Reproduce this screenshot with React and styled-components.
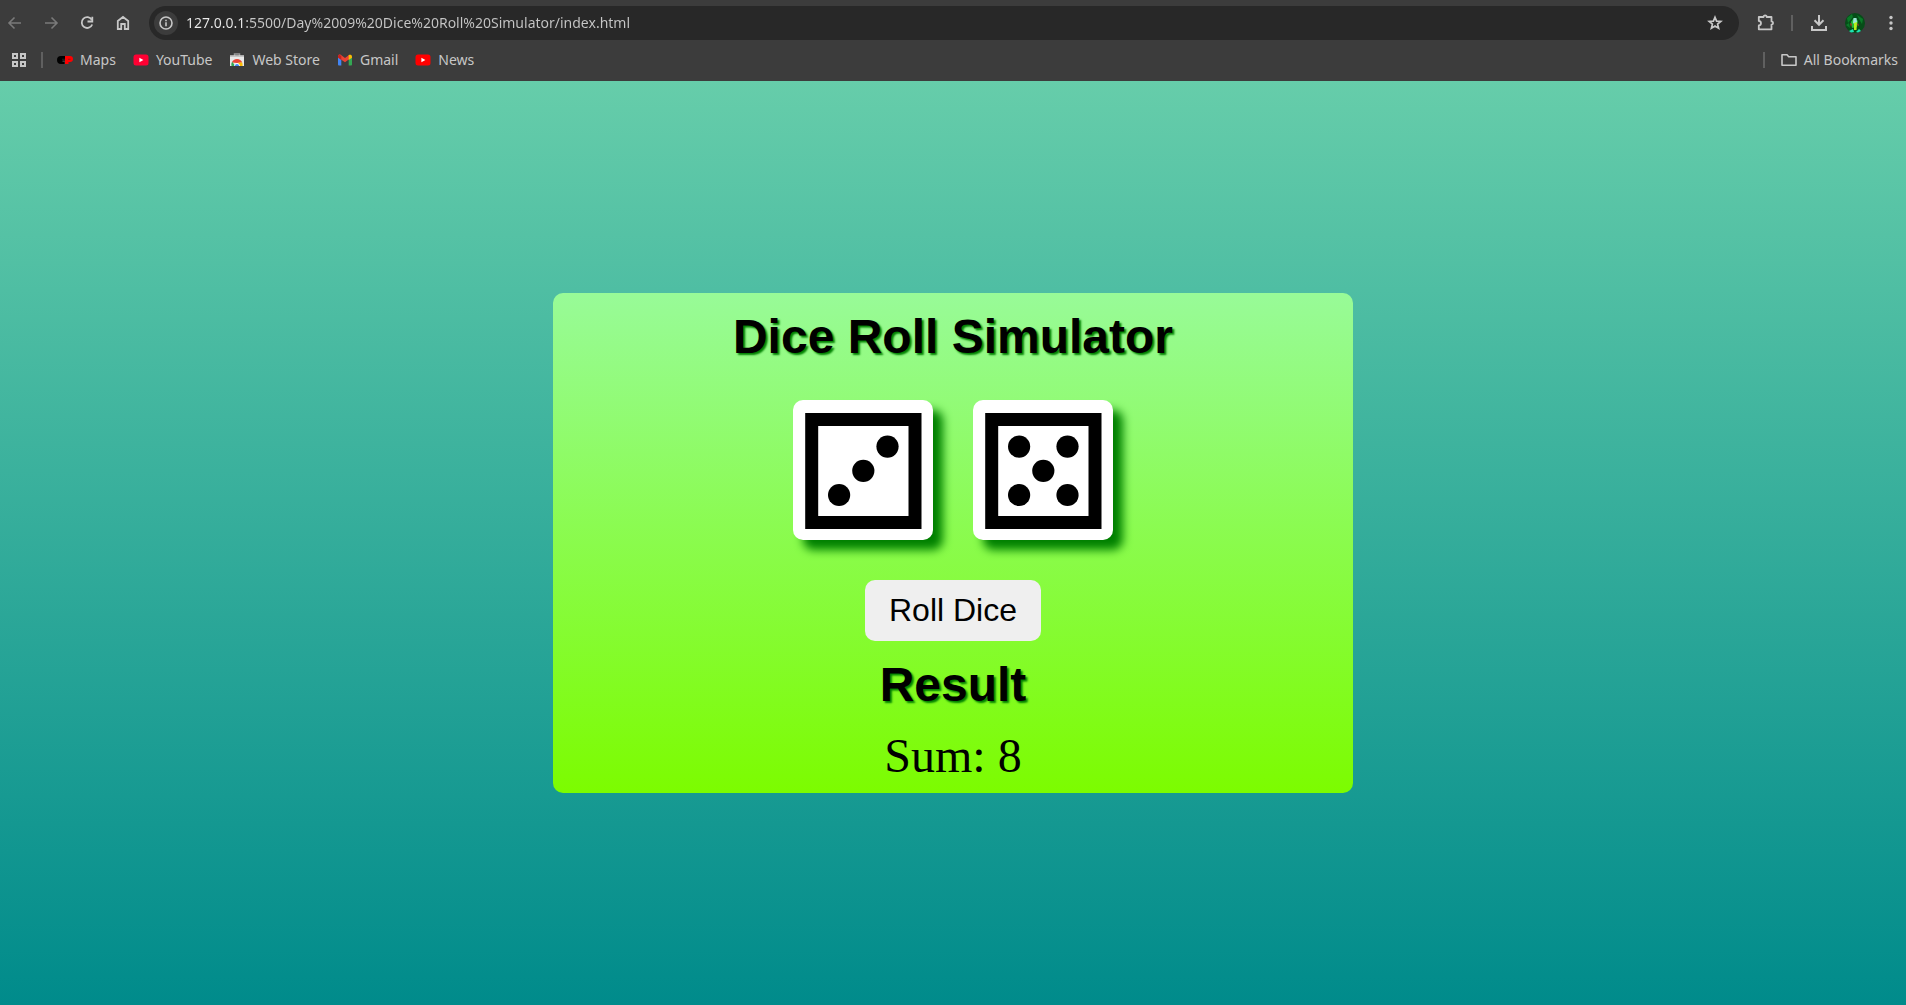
import React, { useState } from "react";
import styled, { createGlobalStyle } from "styled-components";

const GlobalStyle = createGlobalStyle`
  * { box-sizing: border-box; }
  html, body, #root { height: 100%; margin: 0; }
  button { font: inherit; color: inherit; border: 0; background: none; padding: 0; cursor: pointer; }
`;

const Browser = styled.div`
  display: flex;
  flex-direction: column;
  min-height: 100%;
`;

const Chrome = styled.header`
  background: #3c3c3c;
  color: #c7c7c7;
  font-family: "Noto Sans", "Open Sans", sans-serif;
`;

const Toolbar = styled.div`
  display: flex;
  align-items: center;
  height: 46px;
`;

const ButtonGroup = styled.div`
  display: flex;
  align-items: center;
  gap: 6px;
`;

const IconButton = styled.button`
  display: grid;
  place-items: center;
  width: 30px;
  height: 34px;
  color: ${(p) => (p.$dim ? "#7a7a7a" : "#c7c7c7")};
`;

const Divider = styled.span`
  width: 2px;
  height: 16px;
  margin: ${(p) => p.$margin};
  background: #606060;
`;

const AddressBar = styled.form`
  flex: 1;
  display: flex;
  align-items: center;
  height: 34px;
  margin: 0 12px 0 11px;
  padding: 0 9px 0 5px;
  gap: 8px;
  border-radius: 17px;
  background: #282828;
`;

const SiteInfo = styled.button`
  display: grid;
  place-items: center;
  width: 24px;
  height: 24px;
  border-radius: 50%;
  background: #3c3c3c;
`;

const UrlInput = styled.input`
  flex: 1;
  min-width: 0;
  height: 24px;
  padding: 0;
  border: 0;
  outline: 0;
  font: 14px/24px "Noto Sans", "Open Sans", sans-serif;
  color: transparent;
  caret-color: #ffffff;
  background: linear-gradient(90deg, #ebebeb 60px, #c7c7c7 60px);
  background-clip: text;
`;

const BookmarkBar = styled.nav`
  display: flex;
  align-items: center;
  height: 35px;
  padding: 0 8px 8px 11px;
  font-size: 14px;
  line-height: 20px;
`;

const Bookmarks = styled.div`
  display: flex;
  flex: 1;
  gap: 17px;
`;

const Bookmark = styled.a`
  display: flex;
  align-items: center;
  gap: 7px;
  color: inherit;
  text-decoration: none;
`;

const Page = styled.main`
  flex: 1;
  display: flex;
  align-items: center;
  justify-content: center;
  background: linear-gradient(mediumaquamarine, darkcyan);
`;

const Card = styled.section`
  display: flex;
  flex-direction: column;
  align-items: center;
  width: 800px;
  max-width: 100%;
  min-height: 500px;
  padding: 16px 0 8px;
  border-radius: 10px;
  background: linear-gradient(palegreen, lawngreen);
`;

const Title = styled.h1`
  margin: 0;
  font: bold 48px/56px "Liberation Sans", Arial, sans-serif;
  color: #000;
  text-shadow: 2px 2px 2px green;
`;

const DiceRow = styled.div`
  display: flex;
  gap: 40px;
  margin: 35px 0 40px;
`;

const DieBox = styled.div`
  width: 140px;
  height: 140px;
  border-radius: 10px;
  background: #fff;
  box-shadow: 10px 10px 10px green;
`;

const RollButton = styled.button`
  && {
    margin-bottom: 16px;
    padding: 12px 24px;
    border-radius: 10px;
    background: #efefef;
    color: #000;
    font: 32px/37px "Liberation Sans", Arial, sans-serif;
  }
`;

const Sum = styled.p`
  margin: 15px 0 0;
  font: 48px/56px "Liberation Serif", "Times New Roman", serif;
  color: #000;
`;

const Stroke = ({ size = 20, width = 2, children }) => (
  <svg width={size} height={size} viewBox="0 0 20 20" fill="none" stroke="currentColor" strokeWidth={width} aria-hidden="true">
    {children}
  </svg>
);

const ArrowIcon = ({ flip }) => (
  <Stroke width={1.6}>
    <path d={flip ? "M4 10h11.5M10.5 4.500l5.500 5.500-5.500 5.500" : "M16 10H4.500M9.500 4.500L4 10l5.500 5.500"} />
  </Stroke>
);

const PlayIcon = ({ color }) => (
  <svg width="16" height="16" viewBox="0 0 16 16" aria-hidden="true">
    <rect x="0.500" y="2.500" width="15" height="11" rx="2.500" fill={color} />
    <path d="M6.400 5.700v4.600L10.400 8z" fill="#fff" />
  </svg>
);

const MapsIcon = () => (
  <svg width="16" height="16" viewBox="0 0 16 16" aria-hidden="true">
    <path d="M8 4H4a4 4 0 0 0 0 8h3.500V10H5.500V8.600H8z" fill="#000" />
    <path d="M5 6.800h3v.8H5z" fill="#2c2c2c" />
    <path d="M8 4h5a3 3 0 0 1 3 3c0 2-1 3-3 3h-1.500v2H8z" fill="#f00" />
    <path d="M11 6.800h2.500v.8H11z" fill="#8c1010" />
  </svg>
);

const StoreIcon = () => (
  <svg width="16" height="16" viewBox="0 0 16 16" aria-hidden="true">
    <path d="M5.500 4V2h5v2" fill="none" stroke="#999" strokeWidth="1.500" />
    <path d="M1 3.500h14V14H1z" fill="#e8e8e8" />
    <path d="M1 3.500h14V5H1z" fill="#c4c4c4" />
    <path d="M2.800 10.500A5.600 5.600 0 0 1 13.200 10.500L8 11z" fill="#ea4335" />
    <path d="M2.500 14a5.500 5.500 0 0 1 .6-4.200L6.500 14z" fill="#34a853" />
    <path d="M13.200 10.500A5.500 5.500 0 0 1 13.500 14H9l.5-3.500z" fill="#fbbc04" />
    <path d="M5.200 14a2.800 2.800 0 0 1 5.600 0z" fill="#fff" />
    <path d="M5.900 14a2.100 2.100 0 0 1 4.200 0z" fill="#4285f4" />
  </svg>
);

const GmailIcon = () => (
  <svg width="16" height="16" viewBox="0 0 16 16" aria-hidden="true">
    <path d="M1 5v7.500c0 .5.500 1 1 1h2.300V7.500z" fill="#4285f4" />
    <path d="M15 5v7.500c0 .5-.5 1-1 1h-2.300V7.500z" fill="#34a853" />
    <path d="M1 5.500V4.300c0-1.600 1.800-2.300 3-1.400l4 3.100 4-3.100v4.300L8 10.300 1 5.500z" fill="#ea4335" />
    <path d="M1 5.500V4.300c0-.8.500-1.500 1.200-1.700L4.300 4v4z" fill="#c5221f" />
    <path d="M11.700 3.100c1.300-1 3.300-.3 3.300 1.300v1.300L11.700 8z" fill="#fbbc04" />
  </svg>
);

const AvatarIcon = () => (
  <svg width="20" height="20" viewBox="0 0 20 20" aria-hidden="true">
    <circle cx="10" cy="10" r="10" fill="#064d18" />
    <path d="M2 5l5-4 1 3-5 6zM12 2l6 4-1 5-3-5zM1 12l3-2 1 5z" fill="#0a7a28" />
    <path d="M6 9l2-3 2-1 3 3-1 6-5 1z" fill="#24b83b" />
    <path d="M8.500 5h3l.5 4-1.500 3L8 10z" fill="#9be8d8" />
    <path d="M9 10l3-1-.5 8H9z" fill="#b7f01c" />
    <path d="M5 10l2 1-1 3zM13 10l1 3-2-1z" fill="#b13a20" />
    <path d="M4 18l4-2 1 3-3 .5zM11 19l3-3 2 2-3 1.500z" fill="#1ce5b4" />
  </svg>
);

const PIPS = {
  1: [[0, 0]],
  2: [[1, -1], [-1, 1]],
  3: [[1, -1], [0, 0], [-1, 1]],
  4: [[-1, -1], [1, -1], [-1, 1], [1, 1]],
  5: [[-1, -1], [1, -1], [0, 0], [-1, 1], [1, 1]],
  6: [[-1, -1], [1, -1], [-1, 0], [1, 0], [-1, 1], [1, 1]],
};

const Die = ({ value }) => (
  <DieBox>
    <svg width="140" height="140" viewBox="0 0 140 140" role="img" aria-label={`Die showing ${value}`}>
      <rect x="18.700" y="19.500" width="103.300" height="103" fill="none" stroke="#000" strokeWidth="13" />
      {PIPS[value].map(([x, y]) => (
        <circle key={`${x},${y}`} cx={70.3 + x * 24.2} cy={70.8 + y * 24.2} r="11.100" />
      ))}
    </svg>
  </DieBox>
);

const LINKS = [
  ["Maps", <MapsIcon />],
  ["YouTube", <PlayIcon color="#ff0033" />],
  ["Web Store", <StoreIcon />],
  ["Gmail", <GmailIcon />],
  ["News", <PlayIcon color="#ff0000" />],
];

const rollDie = () => 1 + Math.floor(Math.random() * 6);

export default function App() {
  const [dice, setDice] = useState([3, 5]);

  return (
    <Browser>
      <GlobalStyle />
      <Chrome>
        <Toolbar>
          <ButtonGroup>
            <IconButton $dim aria-label="Back"><ArrowIcon /></IconButton>
            <IconButton $dim aria-label="Forward"><ArrowIcon flip /></IconButton>
            <IconButton aria-label="Reload">
              <Stroke width={1.8}>
                <path d="M14.800 6.800A5.400 5.400 0 1 0 15.200 11.500" />
                <path d="M15.300 3.800v4.700h-4.800" />
              </Stroke>
            </IconButton>
            <IconButton aria-label="Home">
              <Stroke width={1.8}>
                <path d="M4.800 16V8L10 4l5.200 4v8h-3.400v-5H8.200v5z" />
              </Stroke>
            </IconButton>
          </ButtonGroup>
          <AddressBar onSubmit={(e) => e.preventDefault()}>
            <SiteInfo type="button" aria-label="View site information">
              <Stroke size={16} width={2}>
                <circle cx="10" cy="10" r="7.500" />
                <path d="M10 9v5M10 5.800v2" />
              </Stroke>
            </SiteInfo>
            <UrlInput
              aria-label="Address"
              spellCheck={false}
              defaultValue="127.0.0.1:5500/Day%2009%20Dice%20Roll%20Simulator/index.html"
            />
            <IconButton type="button" aria-label="Bookmark this page">
              <Stroke width={1.7}>
                <path d="M10 4.200l1.600 3.900 4.200.3-3.200 2.700 1 4.100-3.600-2.200-3.600 2.200 1-4.100-3.200-2.700 4.200-.3z" />
              </Stroke>
            </IconButton>
          </AddressBar>
          <IconButton aria-label="Extensions">
            <Stroke width={1.8}>
              <path d="M2.800 4h4.700a1.600 1.600 0 0 1 3.200 0H15.500v4.400a1.600 1.600 0 0 1 0 3.200V16.300H2.800v-3.900c2.900-.2 2.900-4.300 0-4.500z" strokeLinejoin="round" />
            </Stroke>
          </IconButton>
          <Divider $margin="0 11px 0 10px" />
          <ButtonGroup>
            <IconButton aria-label="Downloads">
              <Stroke>
                <path d="M10 2v9.500M5.500 7.300L10 11.800l4.500-4.500M3 13v4h14v-4" />
              </Stroke>
            </IconButton>
            <IconButton aria-label="Profile"><AvatarIcon /></IconButton>
            <IconButton aria-label="Menu">
              <svg width="20" height="20" viewBox="0 0 20 20" fill="currentColor" aria-hidden="true">
                <circle cx="10" cy="4.500" r="1.700" />
                <circle cx="10" cy="10" r="1.700" />
                <circle cx="10" cy="15.500" r="1.700" />
              </svg>
            </IconButton>
          </ButtonGroup>
        </Toolbar>
        <BookmarkBar aria-label="Bookmarks">
          <svg width="16" height="16" viewBox="0 0 16 16" fill="none" stroke="currentColor" strokeWidth="2" aria-hidden="true">
            <path d="M2 2h4v4H2zM10 2h4v4h-4zM2 10h4v4H2zM10 10h4v4h-4z" />
          </svg>
          <Divider $margin="0 14px" />
          <Bookmarks>
            {LINKS.map(([label, icon]) => (
              <Bookmark key={label} href="#">{icon}{label}</Bookmark>
            ))}
          </Bookmarks>
          <Divider $margin="0 16px" />
          <Bookmark href="#">
            <svg width="16" height="16" viewBox="0 0 16 16" fill="none" stroke="currentColor" strokeWidth="1.600" strokeLinejoin="round" aria-hidden="true">
              <path d="M1 13.300V2.800h5l1.700 2h7.300v8.500z" />
            </svg>
            All Bookmarks
          </Bookmark>
        </BookmarkBar>
      </Chrome>
      <Page>
        <Card>
          <Title>Dice Roll Simulator</Title>
          <DiceRow>
            {dice.map((value, i) => <Die key={i} value={value} />)}
          </DiceRow>
          <RollButton onClick={() => setDice([rollDie(), rollDie()])}>Roll Dice</RollButton>
          <Title as="h2">Result</Title>
          <Sum>Sum: {dice[0] + dice[1]}</Sum>
        </Card>
      </Page>
    </Browser>
  );
}
